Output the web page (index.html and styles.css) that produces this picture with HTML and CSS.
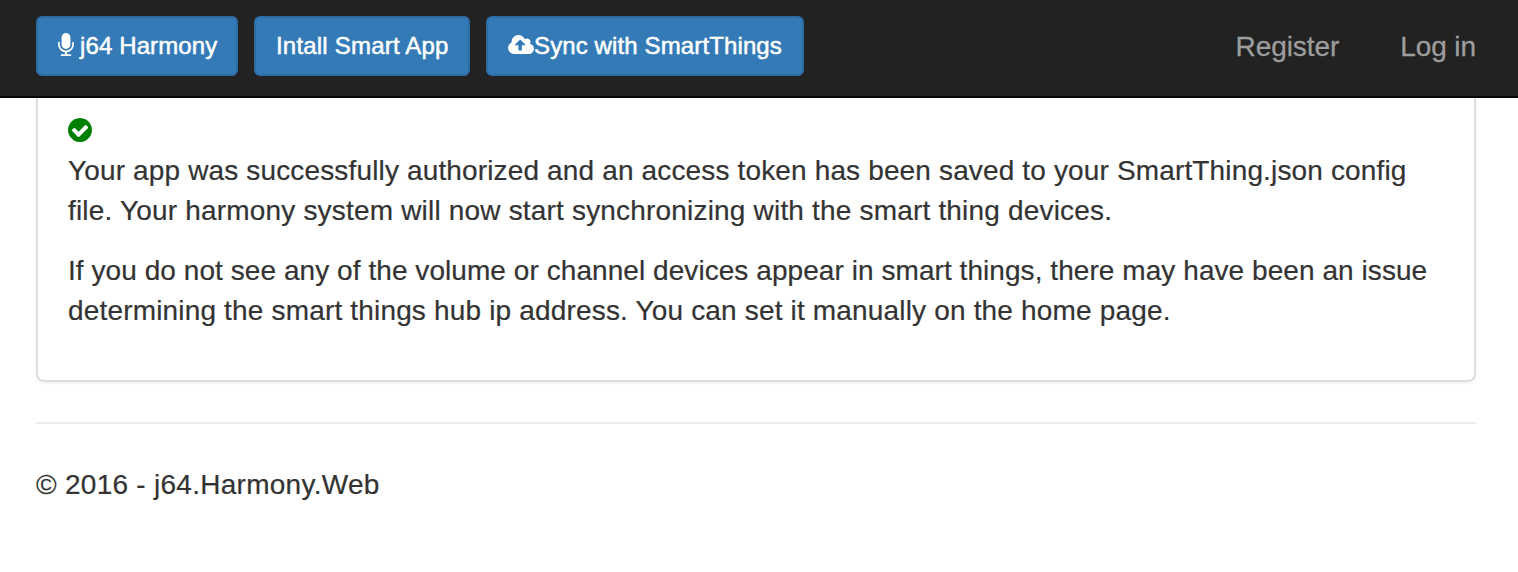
FILE: index.html
```html
<!DOCTYPE html>
<html lang="en">
<head>
<meta charset="utf-8">
<title>j64.Harmony.Web</title>
<link rel="stylesheet" href="styles.css">
</head>
<body>
<header class="navbar">
  <nav class="actions">
    <a class="btn btn-home"><svg class="mic" viewBox="0 0 1152 1664"><path d="M1152 704v128q0 221-147.500 384.500t-364.500 187.500v132h256q26 0 45 19t19 45-19 45-45 19h-640q-26 0-45-19t-19-45 19-45 45-19h256v-132q-217-24-364.500-187.500t-147.500-384.500v-128q0-26 19-45t45-19 45 19 19 45v128q0 185 131.500 316.500t316.500 131.500 316.500-131.500 131.500-316.500v-128q0-26 19-45t45-19 45 19 19 45zM896 320v512q0 132-94 226t-226 94-226-94-94-226v-512q0-132 94-226t226-94 226 94 94 226z"/></svg><span class="label">j64 Harmony</span></a>
    <a class="btn btn-install"><span class="label">Intall Smart App</span></a>
    <a class="btn btn-sync"><svg class="cloud" viewBox="0 0 1920 1408"><path d="M1280 736q0-14-9-23l-352-352q-9-9-23-9t-23 9l-351 351q-10 12-10 24 0 14 9 23t23 9h224v352q0 13 9.500 22.500t22.500 9.500h192q13 0 22.500-9.500t9.500-22.500v-352h224q13 0 22.500-9.500t9.500-22.500zM1920 1024q0 159-112.500 271.500t-271.500 112.500h-1088q-185 0-316.500-131.500t-131.500-316.500q0-130 70-240t188-165q-2-30-2-43 0-212 150-362t362-150q156 0 285.500 87t188.500 231q71-62 166-62 106 0 181 75t75 181q0 76-41 138 130 31 213.500 135.500t83.500 238.500z"/></svg><span class="label">Sync with SmartThings</span></a>
  </nav>
  <nav class="account"><a class="register">Register</a><a class="login">Log in</a></nav>
</header>
<main class="container">
  <section class="panel">
    <svg class="check" viewBox="0 0 1536 1536"><path d="M1284 606q0-28-18-46l-91-90q-19-19-45-19t-45 19l-408 407-226-226q-19-19-45-19t-45 19l-91 90q-18 18-18 46 0 27 18 45l362 362q19 19 45 19 27 0 46-19l543-543q18-18 18-45zM1536 768q0 209-103 385.500t-279.500 279.500-385.500 103-385.500-103-279.500-279.500-103-385.500 103-385.500 279.500-279.500 385.500-103 385.500 103 279.500 279.500 103 385.500z"/></svg>
    <p><span class="line l1">Your app was successfully authorized and an access token has been saved to your SmartThing.json config</span> <span class="line l2">file. Your harmony system will now start synchronizing with the smart thing devices.</span></p>
    <p><span class="line l3">If you do not see any of the volume or channel devices appear in smart things, there may have been an issue</span> <span class="line l4">determining the smart things hub ip address. You can set it manually on the home page.</span></p>
  </section>
  <hr>
  <footer><span class="foot">© 2016 - j64.Harmony.Web</span></footer>
</main>
</body>
</html>
```

FILE: styles.css
```css
* { box-sizing: border-box; }
body { margin: 0; background: #fff; color: #333; font: 28px/40px "Liberation Sans", Arial, sans-serif; overflow: hidden; }
.navbar { height: 98px; padding: 16px 42px 0 36px; background: #222; border-bottom: 2px solid #080808; display: flex; justify-content: space-between; }
.actions { display: flex; gap: 16px; }
.btn { height: 60px; border: 2px solid #2e6da4; border-radius: 6px; background: #337ab7; color: #fff; font-size: 24px; line-height: 56px; padding-left: 20px; display: flex; white-space: nowrap; -webkit-text-stroke: .5px #fff; }
.btn-home { width: 202px; letter-spacing: .12px; }
.btn-install { width: 216px; letter-spacing: .2px; }
.btn-sync { width: 318px; letter-spacing: .12px; }
.btn svg { fill: #fff; flex: none; }
.mic { width: 16px; height: 23px; margin: 15px 6px 0 0; }
.cloud { width: 26px; height: 19px; margin-top: 17px; }
.account { display: flex; gap: 61px; padding-top: 1px; color: #9d9d9d; line-height: 60px; white-space: nowrap; letter-spacing: -.08px; -webkit-text-stroke: .3px #9d9d9d; }
.container { padding: 0 42px 0 36px; }
.panel { height: 284px; padding: 20px 30px 0; border: 2px solid #ddd; border-top: 0; border-radius: 0 0 8px 8px; box-shadow: 0 2px 2px rgba(0,0,0,.05); }
.check { display: block; width: 24px; height: 24px; fill: #008000; margin-bottom: 9px; }
.panel p { margin: 0 0 20px; -webkit-text-stroke: .2px #333; }
.line { display: table; white-space: nowrap; }
.l1 { letter-spacing: .147px; }
.l2 { letter-spacing: .185px; }
.l3 { letter-spacing: .062px; }
.l4 { letter-spacing: .17px; }
hr { height: 2px; border: 0; background: #eee; margin: 40px 0; }
footer { padding-top: 1px; white-space: nowrap; letter-spacing: .27px; -webkit-text-stroke: .2px #333; }
```
